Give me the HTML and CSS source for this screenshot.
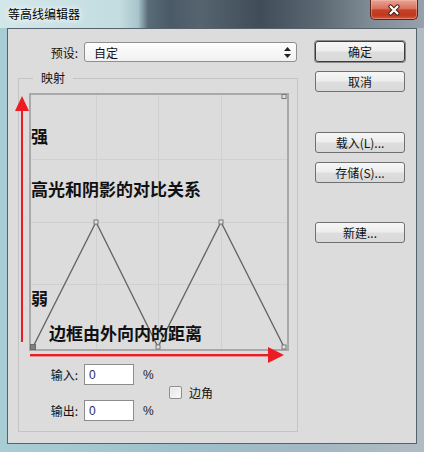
FILE: index.html
```html
<!DOCTYPE html>
<html lang="zh-CN">
<head>
  <meta charset="UTF-8">
  <meta name="viewport" content="width=device-width, initial-scale=1.0">
  <title>等高线编辑器</title>
  <link rel="stylesheet" href="styles.css">
</head>
<body>
  <div class="window">
    <div class="titlebar">
      <span class="title">等高线编辑器</span>
      <div class="close-btn">
        <svg width="14" height="12" viewBox="0 0 14 12">
          <path d="M3.5 2.5 L10.5 9.5 M10.5 2.5 L3.5 9.5" stroke="#4a1f17" stroke-width="4.2" stroke-linecap="round"/>
          <path d="M3.5 2.5 L10.5 9.5 M10.5 2.5 L3.5 9.5" stroke="#fff" stroke-width="2.2" stroke-linecap="round"/>
        </svg>
      </div>
    </div>

    <div class="client">
      <div class="left-col">
        <div class="preset-row">
          <span class="preset-label">预设:</span>
          <div class="select">
            <span>自定</span>
            <svg width="7" height="11" viewBox="0 0 7 11">
              <polygon points="3.5,0 7,4 0,4" fill="#222"/>
              <polygon points="0,7 7,7 3.5,11" fill="#222"/>
            </svg>
          </div>
        </div>

        <fieldset class="group">
          <legend>映射</legend>
          <div class="graph">
            <!-- curve canvas, 278x277 -->
            <svg class="graph-svg" width="278" height="277" viewBox="0 0 278 277">
              <rect x="11" y="9" width="258" height="256" fill="none" stroke="#a9a9a9" stroke-width="2"/>
              <g stroke="#d0d0d0" stroke-width="1">
                <line x1="77.5" y1="10" x2="77.5" y2="264"/>
                <line x1="139.5" y1="10" x2="139.5" y2="264"/>
                <line x1="202.5" y1="10" x2="202.5" y2="264"/>
                <line x1="12" y1="74.5" x2="268" y2="74.5"/>
                <line x1="12" y1="137.5" x2="268" y2="137.5"/>
                <line x1="12" y1="199.5" x2="268" y2="199.5"/>
              </g>
              <polyline points="14,262 77,137 139,262 202,137 265,262" fill="none" stroke="#666" stroke-width="1.4"/>
              <g fill="#e2e2e2" stroke="#777" stroke-width="1">
                <rect x="75" y="135" width="4" height="4"/>
                <rect x="137" y="260" width="4" height="4"/>
                <rect x="200" y="135" width="4" height="4"/>
                <rect x="263" y="260" width="4" height="4"/>
                <rect x="263" y="9.5" width="4" height="4"/>
              </g>
              <rect x="11.5" y="259.5" width="5" height="5" fill="#808080" stroke="#6a6a6a"/>
              <g fill="#ec1c24" stroke="none">
                <rect x="2" y="25" width="2" height="232"/>
                <polygon points="3,11 -4,26 10,26"/>
                <rect x="11" y="269" width="239" height="2.4"/>
                <polygon points="249,262 265,270 249,278"/>
              </g>
            </svg>
            <span class="note note-strong">强</span>
            <span class="note note-contrast">高光和阴影的对比关系</span>
            <span class="note note-weak">弱</span>
            <span class="note note-distance">边框由外向内的距离</span>
          </div>

          <div class="io">
            <div class="io-fields">
              <div class="io-row">
                <span class="io-label">输入:</span>
                <input class="num" type="text" value="0">
                <span class="pct">%</span>
              </div>
              <div class="io-row">
                <span class="io-label">输出:</span>
                <input class="num" type="text" value="0">
                <span class="pct">%</span>
              </div>
            </div>
            <div class="corner">
              <span class="checkbox"></span>
              <span>边角</span>
            </div>
          </div>
        </fieldset>
      </div>

      <div class="right-col">
        <button class="btn btn-default">确定</button>
        <button class="btn">取消</button>
        <button class="btn btn-load">载入(L)...</button>
        <button class="btn">存储(S)...</button>
        <button class="btn btn-new">新建...</button>
      </div>
    </div>
  </div>
</body>
</html>
```

FILE: styles.css
```css
body {
  margin: 0;
  font-family: "Noto Sans CJK SC", "Noto Sans", sans-serif;
  font-size: 12px;
  color: #111;
}

.window {
  width: 424px;
  height: 452px;
  display: flex;
  flex-direction: column;
  background: linear-gradient(to right, #a9cdd4, #9ebfca 45%, #a3b8c3 75%, #b0bcc2);
}

.titlebar {
  height: 28px;
  flex: none;
  display: flex;
  align-items: flex-start;
  background: linear-gradient(to right, #d3e7ea 0, #c2dce0 120px, #a9c6cc 138px, #5a6b78 148px, #4a5a67 170px, #56646f 200px, #404d59 260px, #5c6973 320px, #7f8b95 370px, #96a2ab 424px);
}

.title {
  padding: 6px 0 0 8px;
  line-height: 16px;
  color: #000;
  text-shadow: 0 0 5px #fff, 0 0 8px rgba(255, 255, 255, 0.8);
}

.close-btn {
  margin-left: auto;
  margin-right: 6px;
  width: 48px;
  height: 20px;
  box-sizing: border-box;
  border: 1px solid #5d2418;
  border-top: none;
  border-radius: 0 0 5px 5px;
  background: linear-gradient(#e9a394, #d9725c 45%, #c5432a 52%, #c0381e 80%, #d25a3c);
  box-shadow: inset 0 0 0 1px rgba(255, 200, 190, 0.4);
  display: flex;
  align-items: center;
  justify-content: center;
}

.client {
  flex: 1;
  margin: 0 7px 8px;
  border: 1px solid #56636d;
  background: #dcdcdc;
  display: flex;
  padding: 11px 0 0 10px;
}

.left-col {
  width: 280px;
  display: flex;
  flex-direction: column;
}

.preset-row {
  display: flex;
  align-items: center;
  height: 20px;
  margin-top: 2px;
}

.preset-label {
  width: 64px;
  padding-right: 4px;
  box-sizing: border-box;
  text-align: right;
}

.select {
  margin-left: 2px;
  width: 213px;
  height: 20px;
  box-sizing: border-box;
  border: 1px solid #8f8f8f;
  border-radius: 3px;
  background: linear-gradient(#fdfdfd, #f1f1f1);
  display: flex;
  align-items: center;
  padding: 0 5px 0 9px;
}

.select svg {
  margin-left: auto;
}

.group {
  margin: 10px 0 0;
  padding: 0;
  border: 1px solid #c4c4c4;
  height: 360px;
  box-sizing: border-box;
  min-width: 0;
}

.group legend {
  margin-left: 14px;
  padding: 0 8px;
  line-height: 12px;
}

.graph {
  position: relative;
  width: 278px;
  height: 277px;
  margin-top: 1px;
}

.graph-svg {
  display: block;
  overflow: visible;
}

.note {
  position: absolute;
  font-size: 17px;
  line-height: 17px;
  font-weight: 700;
  color: #111;
  white-space: nowrap;
}

.note-strong { left: 12px; top: 42px; }
.note-contrast { left: 12px; top: 95px; }
.note-weak { left: 12px; top: 204px; }
.note-distance { left: 30px; top: 239px; }

.io {
  display: flex;
  align-items: center;
  margin-top: 2px;
}

.io-fields {
  width: 150px;
  display: flex;
  flex-direction: column;
  gap: 15px;
}

.io-row {
  display: flex;
  align-items: center;
  height: 21px;
}

.io-label {
  width: 65px;
  padding-right: 6px;
  box-sizing: border-box;
  text-align: right;
}

.num {
  width: 50px;
  height: 21px;
  box-sizing: border-box;
  border: 1px solid #8c8c8c;
  margin: 0;
  padding: 0 0 0 4px;
  font: 12px "Liberation Sans", sans-serif;
  color: #1d2a66;
  background: #fff;
}

.pct {
  margin-left: 9px;
  font-family: "Liberation Sans", sans-serif;
  color: #222;
}

.corner {
  display: flex;
  align-items: center;
  gap: 7px;
}

.checkbox {
  width: 13px;
  height: 13px;
  box-sizing: border-box;
  border: 1px solid #8e8f8f;
  border-radius: 2px;
  background: linear-gradient(135deg, #e4e4e4, #fbfbfb);
  box-shadow: inset 0 0 0 1px #f2f2f2;
}

.right-col {
  display: flex;
  flex-direction: column;
  padding: 1px 0 0 17px;
}

.btn {
  width: 90px;
  height: 21px;
  margin: 0 0 9px;
  padding: 0;
  border: 1px solid #707070;
  border-radius: 3px;
  background: linear-gradient(#f6f6f6, #ededed 48%, #dedede 52%, #d9d9d9);
  font: 12px "Noto Sans CJK SC", "Noto Sans", sans-serif;
  color: #111;
}

.btn-default {
  border-color: #3d3d3d;
  box-shadow: 0 0 0 1px #8a8a8a;
}

.btn-load {
  margin-top: 31px;
}

.btn-new {
  margin-top: 30px;
}
```
